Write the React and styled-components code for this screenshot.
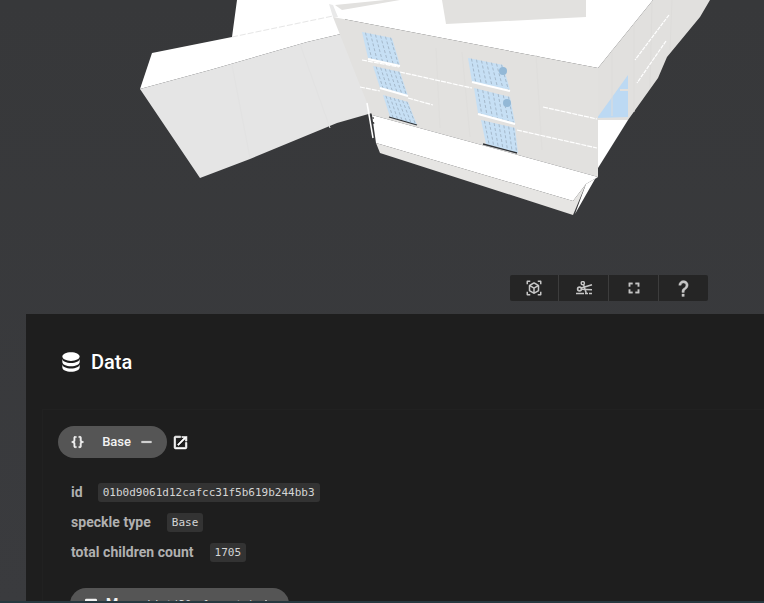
import React from "react"
import styled, { createGlobalStyle } from "styled-components"

const GlobalStyle = createGlobalStyle`
    html, body {
        margin: 0;
        padding: 0;
        background: #38393c;
        font-family: "Roboto", "Liberation Sans", sans-serif;
    }
`

const Page = styled.div`
    width: 764px;
    height: 603px;
    display: flex;
    flex-direction: column;
    overflow: hidden;
    background: linear-gradient(180deg, #37383a 0%, #3a3b3e 100%);
`

const Viewer = styled.div`
    position: relative;
    height: 314px;
    flex: none;
`

const Model = styled.svg`
    display: block;
    width: 764px;
    height: 314px;
`

const Toolbar = styled.div`
    position: absolute;
    left: 510px;
    top: 275px;
    display: flex;
    height: 26px;
    border-radius: 2px;
    overflow: hidden;
    background: #252525;
`

const ToolButton = styled.div`
    box-sizing: border-box;
    width: ${props => props.$width}px;
    display: flex;
    align-items: center;
    justify-content: center;
    border-left: ${props => props.$first ? "none" : "1px solid #3d3d3d"};
    color: #c6c6c6;
`

const Panel = styled.div`
    flex: 1;
    min-height: 0;
    margin-left: 26px;
    padding: 35px 0 0 16px;
    background: #1e1e1e;
    overflow: hidden;
`

const Title = styled.div`
    display: flex;
    align-items: center;
    gap: 7px;
    height: 26px;
    padding-left: 16px;
    color: #fff;
    font-size: 20px;
    font-weight: 500;
`

const Card = styled.div`
    margin-top: 34px;
    padding: 16px 0 0 15px;
    border-left: 1px solid #212121;
    border-top: 1px solid #212121;
`

const ChipRow = styled.div`
    display: flex;
    align-items: center;
    gap: 5px;
`

const Chip = styled.div`
    display: flex;
    align-items: center;
    height: 32px;
    width: ${props => props.$width}px;
    padding: 0 12px;
    box-sizing: border-box;
    border-radius: 16px;
    background: #555;
    color: #f2f2f2;
    font-size: 13px;
    font-weight: 500;
    flex: none;
`

const ChipLabel = styled.span`
    margin-left: ${props => props.$left}px;
    margin-right: ${props => props.$right}px;
    margin-bottom: ${props => props.$lift || 0}px;
    font-size: ${props => props.$size || 13}px;
    font-weight: ${props => props.$weight || 400};
    letter-spacing: ${props => props.$spacing || 0}px;
    display: flex;
`

const ChipNote = styled.span`
    font-family: "DejaVu Sans Mono", monospace;
    font-size: 10.5px;
    font-weight: 400;
    color: #ddd;
    white-space: nowrap;
`

const Fields = styled.div`
    display: flex;
    flex-direction: column;
    gap: 11px;
    margin: 25px 0 0 13px;
`

const Field = styled.div`
    display: flex;
    align-items: center;
    height: 19px;
    gap: ${props => props.$gap}px;
`

const FieldName = styled.span`
    margin-bottom: 2px;
    color: #b0b0b0;
    font-size: 14px;
    font-weight: 700;
    letter-spacing: 0.04px;
`

const Code = styled.code`
    display: block;
    height: 19px;
    line-height: 19px;
    padding: 0 5px;
    border-radius: 3px;
    background: #333;
    color: #d6d6d6;
    font-family: "DejaVu Sans Mono", monospace;
    font-size: 11px;
`

const NextChip = styled(Chip)`
    margin: 26px 0 0 12px;
    padding: 0 13px;
`

const BottomEdge = styled.div`
    height: 2px;
    flex: none;
    background: #26383f;
`

const Icon = ({ d, size = 24, color = "currentColor", bold = 0 }) => (
    <svg width={size} height={size} viewBox="0 0 24 24" fill={color} stroke={bold ? color : "none"} strokeWidth={bold}>
        <path d={d} />
    </svg>
)

const icons = {
    cube: "M17,22V20H20V17H22V20.5C22,20.89 21.84,21.24 21.54,21.54C21.24,21.84 20.89,22 20.5,22H17M7,22H3.5C3.11,22 2.76,21.84 2.46,21.54C2.16,21.24 2,20.89 2,20.5V17H4V20H7V22M17,2H20.5C20.89,2 21.24,2.16 21.54,2.46C21.84,2.76 22,3.11 22,3.5V7H20V4H17V2M7,2V4H4V7H2V3.5C2,3.11 2.16,2.76 2.46,2.46C2.76,2.16 3.11,2 3.5,2H7M13,17.25L17,14.95V10.36L13,12.65V17.25M12,10.92L16,8.63L12,6.28L8,8.63L12,10.92M7,14.95L11,17.25V12.65L7,10.36V14.95M18.23,7.59C18.73,7.91 19,8.34 19,8.91V15.23C19,15.8 18.73,16.23 18.23,16.55L12.75,19.73C12.25,20.05 11.75,20.05 11.25,19.73L5.77,16.55C5.27,16.23 5,15.8 5,15.23V8.91C5,8.34 5.27,7.91 5.77,7.59L11.25,4.41C11.5,4.28 11.75,4.22 12,4.22C12.25,4.22 12.5,4.28 12.75,4.41L18.23,7.59Z",
    fullscreen: "M7 14H5v5h5v-2H7zm-2-4h2V7h3V5H5zm12 7h-3v2h5v-5h-2zM14 5v2h3v3h2V5z",
    help: "M10,19H13V22H10V19M12,2C17.35,2.22 19.68,7.62 16.5,11.67C15.67,12.67 14.33,13.33 13.67,14.17C13,15 13,16 13,17H10C10,15.33 10,13.92 10.67,12.92C11.33,11.92 12.67,11.33 13.5,10.67C15.92,8.43 15.32,5.26 12,5A3,3 0 0,0 9,8H6A6,6 0 0,1 12,2Z",
    database: "M12,3C7.58,3 4,4.79 4,7C4,9.21 7.58,11 12,11C16.42,11 20,9.21 20,7C20,4.79 16.42,3 12,3M4,9V12C4,14.21 7.58,16 12,16C16.42,16 20,14.21 20,12V9C20,11.21 16.42,13 12,13C7.58,13 4,11.21 4,9M4,14V17C4,19.21 7.58,21 12,21C16.42,21 20,19.21 20,17V14C20,16.21 16.42,18 12,18C7.58,18 4,16.21 4,14Z",
    braces: "M8,3A2,2 0 0,0 6,5V9A2,2 0 0,1 4,11H3V13H4A2,2 0 0,1 6,15V19A2,2 0 0,0 8,21H10V19H8V14A2,2 0 0,0 6,12A2,2 0 0,0 8,10V5H10V3M16,3A2,2 0 0,1 18,5V9A2,2 0 0,0 20,11H21V13H20A2,2 0 0,0 18,15V19A2,2 0 0,1 16,21H14V19H16V14A2,2 0 0,1 18,12A2,2 0 0,1 16,10V5H14V3H16Z",
    minus: "M19,13H5V11H19V13Z",
    plus: "M19,13H13V19H11V13H5V11H11V5H13V11H19V13Z",
    open: "M14,3V5H17.59L7.76,14.83L9.17,16.24L19,6.41V10H21V3M19,19H5V5H12V3H5C3.89,3 3,3.9 3,5V19A2,2 0 0,0 5,21H19A2,2 0 0,0 21,19V12H19V19Z",
    table: "M5,4H19A2,2 0 0,1 21,6V18A2,2 0 0,1 19,20H5A2,2 0 0,1 3,18V6A2,2 0 0,1 5,4M5,8V12H11V8H5M13,8V12H19V8H13M5,14V18H11V14H5M13,14V18H19V14H13Z",
}

// section tool: scissors over a dashed cut line
const SectionIcon = () => (
    <svg width="18" height="14" viewBox="0 0 18 14" fill="none" stroke="currentColor">
        <circle cx="7.8" cy="2.2" r="1.6" strokeWidth="1.5" />
        <circle cx="4.5" cy="8" r="1.9" strokeWidth="1.6" />
        <path d="M6.2 7 L17 3.8 M6.4 8.2 L17 8.8 M8.6 4 L11.2 12" strokeWidth="1.6" />
        <path d="M1 12.5 H17" strokeWidth="1.6" strokeDasharray="8 1 3 1 5" />
    </svg>
)

const pts = list => list.map(p => p.join(",")).join(" ")

// glass pane: tl, tr, br, bl corners with its mullions
const Pane = ({ corners, count }) => {
    const [tl, tr, br, bl] = corners
    const lerp = (a, b, t) => [a[0] + (b[0] - a[0]) * t, a[1] + (b[1] - a[1]) * t]
    const mullions = Array.from({ length: count }, (_, i) => (i + 0.7) / count)
    return (
        <g>
            <polygon points={pts(corners)} fill="#c6dff4" />
            {mullions.map(t => {
                const a = lerp(tl, tr, t)
                const b = lerp(bl, br, t)
                return <line key={t} x1={a[0]} y1={a[1]} x2={b[0]} y2={b[1]} stroke="#a5b9cb" strokeWidth="1" strokeDasharray="3 2" />
            })}
        </g>
    )
}

const panes = [
    { corners: [[362, 32], [392, 38], [400, 65], [368, 58]], count: 6 },
    { corners: [[373, 66], [400, 72], [408, 96], [380, 88]], count: 6 },
    { corners: [[383, 95], [408, 102], [417, 125], [390, 117]], count: 6 },
    { corners: [[468, 58], [503, 65], [510, 90], [472, 82]], count: 7 },
    { corners: [[474, 88], [510, 97], [515, 123], [478, 113]], count: 7 },
    { corners: [[481, 120], [515, 128], [518, 153], [486, 144]], count: 7 },
]

const whiteLines = [
    [362, 60, 399, 67, 1.2, "5 1"], [368, 59, 400, 66, 2, ""], [400, 72, 472, 88, 1.2, "5 1"],
    [360, 87, 380, 91, 1.2, "5 1"], [380, 88, 408, 96, 2, ""], [408, 98, 433, 105, 1.2, "5 1"],
    [472, 82, 510, 91, 2, ""], [478, 114, 515, 124, 2, ""], [517, 130, 597, 148, 1.2, "5 1"],
    [543, 107, 597, 119, 1.2, "5 1"], [669, 15, 635, 60, 1.2, "4 1"], [666, 41, 637, 83, 1.2, "4 1"],
    [367, 103, 373, 138, 1.5, ""],
]

const seams = [
    [[436, 48], [440, 128], "#dfdedc"], [[462, 52], [470, 137], "#dfdedc"], [[536, 55], [542, 150], "#dfdedc"],
    [[612, 50], [612, 116], "#dddcda"], [[634, 24], [634, 112], "#dddcda"], [[652, 2], [650, 88], "#dddcda"], [[672, 0], [670, 50], "#dddcda"],
    [[232, 65], [250, 158], "#e2e2e2"], [[300, 44], [330, 128], "#e2e2e2"],
]

const Building = () => (
    <Model viewBox="0 0 764 314">
        {/* left wing */}
        <polygon points="237,0 232,37 152,53 140,89 210,70 307,42 345,33 345,0" fill="#fff" />
        <polygon points="140,89 200,178 250,159 337,123 372,113 345,33 307,42 210,70" fill="#e5e5e5" />
        {/* roof */}
        <polygon points="237,0 653,0 598,68 333,17 330,0" fill="#fff" />
        <polygon points="335,5 385,0 400,0 342,10" fill="#e2e1df" />
        <polygon points="442,0 446,24 586,17 586,0" fill="#e2e1df" />
        <line x1="232" y1="37" x2="333" y2="16" stroke="#e6e6e6" strokeWidth="1" strokeDasharray="6 2" />
        <polygon points="329,4 333,5 338,17 333,17" fill="#e9e9e9" />
        {/* right face */}
        <polygon points="598,68 653,0 710,0 700,17 667,57 658,78 628,120 598,120" fill="#e1e0de" />
        <polygon points="597,118 628,75 628,117" fill="#bcd9f3" />
        <line x1="620" y1="90" x2="628" y2="90" stroke="#e1e0de" strokeWidth="2" />
        <polygon points="598,120 628,120 598,168" fill="#fff" />
        {/* front facade */}
        <polygon points="333,17 598,68 598,177 372,115 367,103" fill="#e2e1df" />
        <polygon points="372,115 598,177 586,184 573,201 376,143" fill="#fff" />
        <polygon points="376,143 573,201 586,184 573,215 380,153" fill="#e6e5e3" />
        <polygon points="598,177 595,179 575,214 586,184" fill="#fff" />
        {seams.map(([a, b, color], i) => (
            <line key={i} x1={a[0]} y1={a[1]} x2={b[0]} y2={b[1]} stroke={color} strokeWidth="1" />
        ))}
        {panes.map((pane, i) => <Pane key={i} {...pane} />)}
        <circle cx="503" cy="71" r="4" fill="#93b8d6" />
        <circle cx="507" cy="103" r="4" fill="#93b8d6" />
        {whiteLines.map(([x1, y1, x2, y2, w, dash], i) => (
            <line key={i} x1={x1} y1={y1} x2={x2} y2={y2} stroke="#fff" strokeWidth={w} strokeDasharray={dash} />
        ))}
        <line x1="389" y1="117" x2="417" y2="125" stroke="#2f3338" strokeWidth="1.3" />
        <line x1="483" y1="144" x2="517" y2="153" stroke="#2f3338" strokeWidth="1.3" />
        <line x1="373" y1="117" x2="374" y2="126" stroke="#333" strokeWidth="1" strokeDasharray="2 3" />
    </Model>
)

export default function App() {
    return (
        <Page>
            <GlobalStyle />
            <Viewer>
                <Building />
                <Toolbar>
                    <ToolButton $first $width={48}><Icon d={icons.cube} size={18} /></ToolButton>
                    <ToolButton $width={50}><SectionIcon /></ToolButton>
                    <ToolButton $width={50}><Icon d={icons.fullscreen} size={18} bold={0.5} /></ToolButton>
                    <ToolButton $width={50}><Icon d={icons.help} size={19} bold={0.4} /></ToolButton>
                </Toolbar>
            </Viewer>
            <Panel>
                <Title>
                    <Icon d={icons.database} size={26} />
                    Data
                </Title>
                <Card>
                    <ChipRow>
                        <Chip $width={109}>
                            <Icon d={icons.braces} size={16} bold={0.9} />
                            <ChipLabel $left={17} $right={7} $lift={2} $weight={500}>Base</ChipLabel>
                            <Icon d={icons.minus} size={18} bold={0.5} />
                        </Chip>
                        <Icon d={icons.open} size={17} color="#fff" bold={0.9} />
                    </ChipRow>
                    <Fields>
                        <Field $gap={15}>
                            <FieldName>id</FieldName>
                            <Code>01b0d9061d12cafcc31f5b619b244bb3</Code>
                        </Field>
                        <Field $gap={16}>
                            <FieldName>speckle type</FieldName>
                            <Code>Base</Code>
                        </Field>
                        <Field $gap={16}>
                            <FieldName>total children count</FieldName>
                            <Code>1705</Code>
                        </Field>
                    </Fields>
                    <NextChip $width={219}>
                        <Icon d={icons.table} size={16} />
                        <ChipLabel $left={7} $right={7} $size={14} $weight={700}>Mass</ChipLabel>
                        <ChipNote>List(30 elements)</ChipNote>
                        <ChipLabel $left={4} $right={0}><Icon d={icons.plus} size={14} /></ChipLabel>
                    </NextChip>
                </Card>
            </Panel>
            <BottomEdge />
        </Page>
    )
}
